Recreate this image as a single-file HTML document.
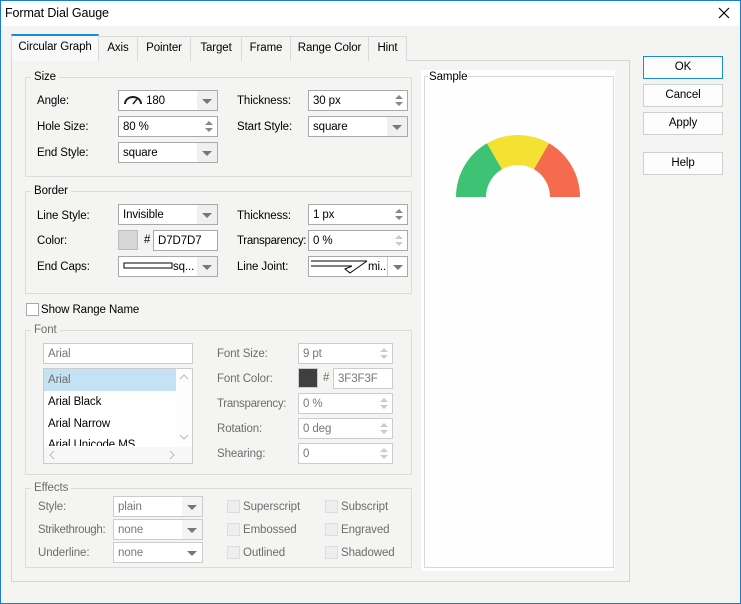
<!DOCTYPE html>
<html><head><meta charset="utf-8"><style>
*{box-sizing:border-box;margin:0;padding:0}
body{width:741px;height:604px;overflow:hidden;font-family:"Liberation Sans",sans-serif;font-size:11.5px;letter-spacing:-0.1px;color:#000;background:#f4f4f2;position:relative}
.a{position:absolute}
.win{left:0;top:0;width:741px;height:604px;border:1px solid #1b7bd0;background:#f4f4f2}
.title{left:1px;top:1px;width:739px;height:25px;background:#fff}
.tab{top:36px;height:25px;border:1px solid #d9d9d9;border-bottom:none;background:#f4f4f2;text-align:center;line-height:22px}
.panel{left:11px;top:60px;width:619px;height:522px;border:1px solid #d5d5d5}
.grp{border:1px solid #dcdcdc}
.gl{background:#f4f4f2;padding:0 3px;line-height:14px}
.f{height:21px;border:1px solid #a9a9a9;background:#fff;line-height:20px;padding-left:4px;white-space:nowrap;overflow:hidden}
.dis .f,.f.d{border-color:#ccc;color:#777}
.dd{position:absolute;right:0;top:0;width:20px;height:19px;background:#f0f0f0}
.dd:after{content:"";position:absolute;left:5px;top:8px;border-left:5px solid transparent;border-right:5px solid transparent;border-top:5px solid #777}
.sp{position:absolute;right:1px;top:1px;width:14px;height:17px}
.sp:before{content:"";position:absolute;left:3px;top:3px;border-left:4px solid transparent;border-right:4px solid transparent;border-bottom:4px solid #888}
.sp:after{content:"";position:absolute;left:3px;top:10px;border-left:4px solid transparent;border-right:4px solid transparent;border-top:4px solid #888}
.d .sp:before{border-bottom-color:#ccc}.d .sp:after{border-top-color:#ccc}
.lbl{line-height:14px}
.g{color:#6d6d6d}
.cb{width:13px;height:13px;border:1px solid #ccc;background:#fff}
.cbd{width:13px;height:13px;border:1px solid #ddd;background:#eee}
.btn{left:643px;width:80px;height:23px;border:1px solid #cfcfcf;background:#fdfdfd;text-align:center;line-height:21px}
</style></head><body>
<div class="a win"></div>
<div class="a title"></div>
<div class="a" style="left:5px;top:6px;font-size:12.5px">Format Dial Gauge</div>
<svg class="a" style="left:718px;top:7px" width="12" height="12"><path d="M1 1L11 11M11 1L1 11" stroke="#000" stroke-width="1.2"/></svg>

<div class="a panel"></div>
<div class="a tab" style="left:11px;width:88px;top:34px;height:27px;background:#f9f9f9;border-color:#d9d9d9;border-top:2px solid #1b8ad9;line-height:22px">Circular Graph</div>
<div class="a tab" style="left:98px;width:40px">Axis</div>
<div class="a tab" style="left:137px;width:54px">Pointer</div>
<div class="a tab" style="left:190px;width:52px">Target</div>
<div class="a tab" style="left:241px;width:50px">Frame</div>
<div class="a tab" style="left:290px;width:79px">Range Color</div>
<div class="a tab" style="left:368px;width:39px">Hint</div>

<!-- Size -->
<div class="a grp" style="left:25px;top:77px;width:387px;height:100px"></div>
<div class="a gl" style="left:31px;top:70px">Size</div>
<div class="a lbl" style="left:37px;top:94px">Angle:</div>
<div class="a f" style="left:118px;top:90px;width:100px"><svg width="20" height="10" style="vertical-align:-1px"><path d="M2 9A8 7 0 0 1 18 9" stroke="#222" stroke-width="2" fill="none"/><path d="M10 9L14 4" stroke="#222" stroke-width="1.5"/></svg> 180<div class="dd"></div></div>
<div class="a lbl" style="left:37px;top:120px">Hole Size:</div>
<div class="a f" style="left:118px;top:116px;width:100px">80 %<div class="sp"></div></div>
<div class="a lbl" style="left:37px;top:146px">End Style:</div>
<div class="a f" style="left:118px;top:142px;width:100px">square<div class="dd"></div></div>
<div class="a lbl" style="left:237px;top:94px">Thickness:</div>
<div class="a f" style="left:308px;top:90px;width:100px">30 px<div class="sp"></div></div>
<div class="a lbl" style="left:237px;top:120px">Start Style:</div>
<div class="a f" style="left:308px;top:116px;width:100px">square<div class="dd"></div></div>

<!-- Border -->
<div class="a grp" style="left:25px;top:191px;width:387px;height:103px"></div>
<div class="a gl" style="left:31px;top:184px">Border</div>
<div class="a lbl" style="left:37px;top:209px">Line Style:</div>
<div class="a f" style="left:118px;top:204px;width:100px">Invisible<div class="dd"></div></div>
<div class="a lbl" style="left:37px;top:234px">Color:</div>
<div class="a" style="left:118px;top:230px;width:20px;height:20px;background:#d7d7d7;border:1px solid #bbb"></div>
<div class="a" style="left:144px;top:234px">#</div>
<div class="a f" style="left:153px;top:230px;width:65px">D7D7D7</div>
<div class="a lbl" style="left:37px;top:260px">End Caps:</div>
<div class="a f" style="left:118px;top:256px;width:100px"><svg width="50" height="8" style="vertical-align:0"><rect x="1" y="1" width="48" height="5" fill="#fff" stroke="#000"/></svg>sq...<div class="dd"></div></div>
<div class="a lbl" style="left:237px;top:209px">Thickness:</div>
<div class="a f" style="left:308px;top:204px;width:100px">1 px<div class="sp"></div></div>
<div class="a lbl" style="left:237px;top:234px;letter-spacing:-0.3px">Transparency:</div>
<div class="a f d" style="left:308px;top:230px;width:100px;color:#000;border-color:#a9a9a9">0 %<div class="sp"></div></div>
<div class="a lbl" style="left:237px;top:260px">Line Joint:</div>
<div class="a f" style="left:308px;top:256px;width:100px;padding-left:1px"><svg width="58" height="18" style="vertical-align:-5px"><path d="M1 4H57M1 9H42M57 4L40 16L35 12L42 9" fill="none" stroke="#000"/></svg>mi...<div class="dd" style="border-left:1px solid #ccc;background:#fff"></div></div>

<div class="a cb" style="left:26px;top:303px;border-color:#aaa"></div>
<div class="a lbl" style="left:41px;top:303px">Show Range Name</div>

<!-- Font -->
<div class="a grp" style="left:25px;top:330px;width:387px;height:145px"></div>
<div class="a gl g" style="left:31px;top:323px">Font</div>
<div class="a f d" style="left:43px;top:343px;width:150px">Arial</div>
<div class="a" style="left:43px;top:368px;width:150px;height:96px;border:1px solid #ccc;background:#fff;overflow:hidden">
<div class="a" style="left:0;top:0;width:132px;height:22px;background:#c4e2f4"></div>
<div class="a g" style="left:4px;top:5px">Arial</div>
<div class="a" style="left:4px;top:27px">Arial Black</div>
<div class="a" style="left:4px;top:49px">Arial Narrow</div>
<div class="a" style="left:4px;top:70px;height:7px;overflow:hidden">Arial Unicode MS</div>
<div class="a" style="left:0;top:78px;width:148px;height:17px;background:#f7f7f7"></div>
<div class="a" style="left:132px;top:0;width:16px;height:78px;background:#fdfdfd"></div>
<svg class="a" style="left:135px;top:4px" width="10" height="70"><path d="M1 6L5 2L9 6M1 62L5 66L9 62" fill="none" stroke="#bbb"/></svg>
<svg class="a" style="left:4px;top:81px" width="130" height="10"><path d="M6 1L2 5L6 9M122 1L126 5L122 9" fill="none" stroke="#bbb"/></svg>
</div>
<div class="a lbl g" style="left:217px;top:347px">Font Size:</div>
<div class="a f d" style="left:298px;top:343px;width:95px">9 pt<div class="sp"></div></div>
<div class="a lbl g" style="left:217px;top:372px">Font Color:</div>
<div class="a" style="left:298px;top:368px;width:20px;height:20px;background:#3f3f3f;border:1px solid #ccc"></div>
<div class="a g" style="left:323px;top:372px">#</div>
<div class="a f d" style="left:333px;top:368px;width:60px">3F3F3F</div>
<div class="a lbl g" style="left:217px;top:397px;letter-spacing:-0.3px">Transparency:</div>
<div class="a f d" style="left:298px;top:393px;width:95px">0 %<div class="sp"></div></div>
<div class="a lbl g" style="left:217px;top:422px">Rotation:</div>
<div class="a f d" style="left:298px;top:418px;width:95px">0 deg<div class="sp"></div></div>
<div class="a lbl g" style="left:217px;top:447px">Shearing:</div>
<div class="a f d" style="left:298px;top:443px;width:95px">0<div class="sp"></div></div>

<!-- Effects -->
<div class="a grp" style="left:25px;top:488px;width:387px;height:80px"></div>
<div class="a gl g" style="left:31px;top:481px">Effects</div>
<div class="a lbl g" style="left:38px;top:500px">Style:</div>
<div class="a f d" style="left:113px;top:496px;width:90px">plain<div class="dd" style="background:#f4f4f4"></div></div>
<div class="a lbl g" style="left:38px;top:523px;letter-spacing:-0.3px">Strikethrough:</div>
<div class="a f d" style="left:113px;top:519px;width:90px">none<div class="dd" style="background:#f4f4f4"></div></div>
<div class="a lbl g" style="left:38px;top:546px">Underline:</div>
<div class="a f d" style="left:113px;top:542px;width:90px">none<div class="dd" style="background:#fff"></div></div>
<div class="a cbd" style="left:227px;top:500px"></div><div class="a lbl g" style="left:243px;top:500px">Superscript</div>
<div class="a cbd" style="left:227px;top:523px"></div><div class="a lbl g" style="left:243px;top:523px">Embossed</div>
<div class="a cbd" style="left:227px;top:546px"></div><div class="a lbl g" style="left:243px;top:546px">Outlined</div>
<div class="a cbd" style="left:325px;top:500px"></div><div class="a lbl g" style="left:341px;top:500px">Subscript</div>
<div class="a cbd" style="left:325px;top:523px"></div><div class="a lbl g" style="left:341px;top:523px">Engraved</div>
<div class="a cbd" style="left:325px;top:546px"></div><div class="a lbl g" style="left:341px;top:546px">Shadowed</div>

<!-- Sample -->
<div class="a" style="left:421px;top:70px;width:194px;height:501px;background:#fdfefd"></div>
<div class="a" style="left:424px;top:76px;width:190px;height:492px;border:1px solid #d8d8d8"></div>
<div class="a" style="left:428px;top:70px;background:#fdfefd;padding:0 1px;line-height:14px">Sample</div>
<svg class="a" style="left:450px;top:130px" width="136" height="70">
<g transform="translate(68,67)">
<path d="M-62 0A62 62 0 0 1 -31 -53.69L-16 -27.71A32 32 0 0 0 -32 0Z" fill="#3dc373"/>
<path d="M-31 -53.69A62 62 0 0 1 31 -53.69L16 -27.71A32 32 0 0 0 -16 -27.71Z" fill="#f5e132"/>
<path d="M31 -53.69A62 62 0 0 1 62 0L32 0A32 32 0 0 0 16 -27.71Z" fill="#f46b4e"/>
</g></svg>

<div class="a btn" style="top:56px;border-color:#1b8ad9">OK</div>
<div class="a btn" style="top:84px">Cancel</div>
<div class="a btn" style="top:112px">Apply</div>
<div class="a btn" style="top:152px">Help</div>
</body></html>
